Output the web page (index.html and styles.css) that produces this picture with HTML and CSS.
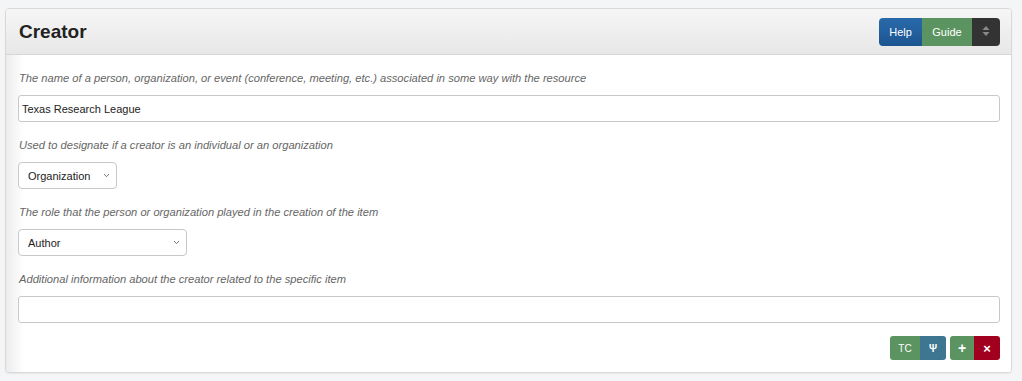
FILE: index.html
```
<!DOCTYPE html>
<html lang="en">
<head>
  <meta charset="UTF-8" />
  <title>Creator</title>
  <link rel="stylesheet" href="styles.css">
</head>
<body>
  <div class="panel">
    <div class="panel-heading">
      <h3>Creator</h3>
      <div class="btn-group">
        <button class="btn btn-help">Help</button>
        <button class="btn btn-guide">Guide</button>
        <button class="btn btn-sort">
          <svg width="8" height="12" viewBox="0 0 8 12"><path d="M4 1 L7.5 5 H0.5 Z M4 11 L7.5 7 H0.5 Z" fill="#8a8a8a"/></svg>
        </button>
      </div>
    </div>

    <div class="panel-body">
      <div class="field">
        <label>The name of a person, organization, or event (conference, meeting, etc.) associated in some way with the resource</label>
        <input type="text" value="Texas Research League" />
      </div>

      <div class="field">
        <label>Used to designate if a creator is an individual or an organization</label>
        <div class="select-wrap w-type">
          <select><option>Organization</option></select>
          <svg class="chev" width="7" height="5" viewBox="0 0 7 5"><path d="M1 1 L3.5 3.7 L6 1" fill="none" stroke="#777" stroke-width="1"/></svg>
        </div>
      </div>

      <div class="field">
        <label>The role that the person or organization played in the creation of the item</label>
        <div class="select-wrap w-role">
          <select><option>Author</option></select>
          <svg class="chev" width="7" height="5" viewBox="0 0 7 5"><path d="M1 1 L3.5 3.7 L6 1" fill="none" stroke="#777" stroke-width="1"/></svg>
        </div>
      </div>

      <div class="field">
        <label>Additional information about the creator related to the specific item</label>
        <input type="text" value="" />
      </div>

      <div class="actions">
        <div class="btn-group">
          <button class="btn-sm btn-tc">TC</button>
          <button class="btn-sm btn-psi">Ψ</button>
        </div>
        <div class="btn-group">
          <button class="btn-sm btn-add">+</button>
          <button class="btn-sm btn-del">×</button>
        </div>
      </div>
    </div>
  </div>
</body>
</html>
```

FILE: styles.css
```
body {
  font-family: "Liberation Sans", Arial, sans-serif;
  background: #f4f5f7;
  margin: 0;
  padding: 8px 10px 8px 5px;
}
.panel {
  background: #fff;
  border: 1px solid #d9d9d9;
  border-radius: 4px;
  box-shadow: 0 1px 2px rgba(0, 0, 0, 0.06);
  overflow: hidden;
}
.panel-heading {
  display: flex;
  align-items: center;
  justify-content: space-between;
  height: 45px;
  padding: 0 11px 0 13px;
  background: linear-gradient(#f6f6f6, #e7e7e7);
  border-bottom: 1px solid #d6d6d6;
}
.panel-heading h3 {
  margin: 0;
  font-size: 19px;
  font-weight: bold;
  color: #222;
}
.btn-group {
  display: flex;
}
.btn {
  height: 28px;
  border: none;
  color: #fff;
  font-family: inherit;
  font-size: 11px;
  padding: 0 10px;
}
.btn-help {
  width: 43px;
  background: linear-gradient(#2a6aab, #1c5590);
  border-radius: 4px 0 0 4px;
}
.btn-guide {
  width: 50px;
  background: #5b9460;
}
.btn-sort {
  width: 28px;
  padding: 0;
  background: #333;
  border-radius: 0 4px 4px 0;
}
.panel-body {
  padding: 16px 11px 12px 12px;
  background: linear-gradient(90deg, #ececec, #fff 18px);
}
.field {
  margin-bottom: 16px;
}
.field label {
  display: block;
  font-size: 11.15px;
  font-style: italic;
  color: #666;
  line-height: 15px;
  margin-bottom: 9px;
  padding-left: 1px;
}
.field input {
  display: block;
  width: 100%;
  height: 27px;
  box-sizing: border-box;
  border: 1px solid #c8c8c8;
  border-radius: 3px;
  padding: 0 3px;
  font-family: inherit;
  font-size: 11px;
  color: #222;
  background: #fff;
}
.select-wrap {
  position: relative;
  height: 27px;
}
.w-type {
  width: 99px;
}
.w-role {
  width: 169px;
}
.select-wrap select {
  width: 100%;
  height: 100%;
  appearance: none;
  -webkit-appearance: none;
  border: 1px solid #c8c8c8;
  border-radius: 4px;
  background: #fff;
  padding: 0 9px;
  font-family: inherit;
  font-size: 11px;
  color: #222;
}
.chev {
  position: absolute;
  right: 7px;
  top: 11px;
  pointer-events: none;
}
.actions {
  display: flex;
  justify-content: flex-end;
  gap: 4px;
  margin-top: -3px;
}
.btn-sm {
  height: 24px;
  border: none;
  color: #fff;
  font-family: inherit;
  font-size: 10px;
  font-weight: bold;
  padding: 0;
}
.btn-tc {
  width: 30px;
  background: #5b9460;
  border-radius: 3px 0 0 3px;
  font-weight: normal;
}
.btn-psi {
  width: 26px;
  background: #3e7590;
  border-radius: 0 3px 3px 0;
}
.btn-add {
  width: 24px;
  background: #5b9460;
  border-radius: 3px 0 0 3px;
  font-size: 14px;
}
.btn-del {
  width: 26px;
  background: #a1001e;
  border-radius: 0 3px 3px 0;
  font-size: 13px;
}
```
